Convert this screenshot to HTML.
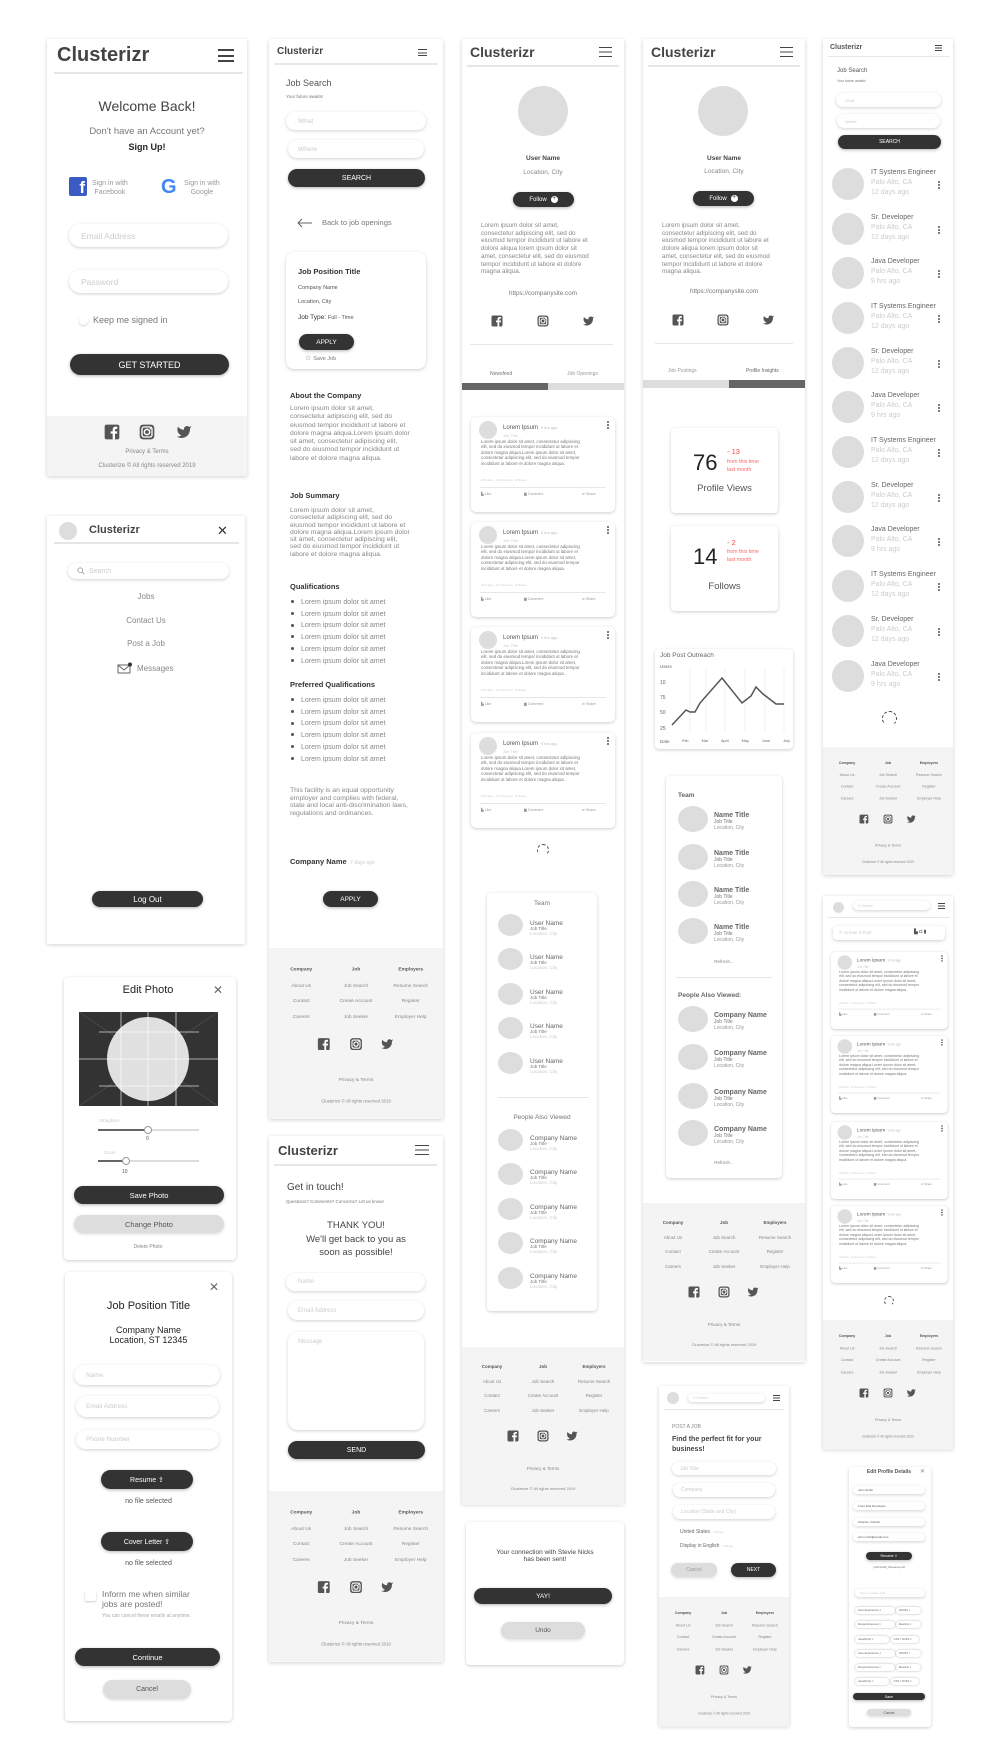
<!DOCTYPE html>
<html><head><meta charset="utf-8"><style>
*{box-sizing:border-box;margin:0;padding:0}
body{width:1000px;height:1750px;position:relative;overflow:hidden;background:#fff;font-family:"Liberation Sans",Arial,sans-serif;color:#555}
.a{position:absolute}
.t{position:absolute;white-space:nowrap;line-height:1}
.c{position:absolute;background:#fff;box-shadow:0 1px 4px rgba(0,0,0,.18)}
.r{position:absolute;background:#fff;border-radius:8px;box-shadow:0 1px 3px rgba(0,0,0,.2)}
.inp{position:absolute;background:#fff;border-radius:20px;box-shadow:0 1px 3px rgba(0,0,0,.18);color:#ccc;white-space:nowrap;display:flex;align-items:center}
.btn{position:absolute;background:#333;color:#fff;border-radius:20px;box-shadow:0 1px 3px rgba(0,0,0,.3);display:flex;align-items:center;justify-content:center;white-space:nowrap}
.gb{position:absolute;background:#ddd;color:#555;border-radius:20px;box-shadow:0 1px 3px rgba(0,0,0,.15);display:flex;align-items:center;justify-content:center;white-space:nowrap}
.av{position:absolute;border-radius:50%;background:#ddd}
.ln{position:absolute;height:2px;background:#e6e6e6}
.hb{position:absolute;border-top:solid #444;border-bottom:solid #444}
.hb:after{content:"";position:absolute;left:0;right:0;top:50%;transform:translateY(-50%);border-top:inherit;border-top-color:#444}
.ft{position:absolute;width:162px;height:158px;background:#f4f4f4;transform-origin:0 0}
.ft .col{position:absolute;top:13px;width:54px;text-align:center;font-size:4.5px;line-height:14.5px;color:#888}
.ft .col b{color:#555}
.ft .ic{position:absolute;top:83px;width:12px;height:12px}
.ft .p{position:absolute;left:0;right:0;text-align:center;font-size:4.5px;color:#888}
.post{position:absolute;width:144px;height:95px;background:#fff;border-radius:5px;box-shadow:0 1px 3px rgba(0,0,0,.2);transform-origin:0 0}
.post .tx{position:absolute;left:10px;top:22px;font-size:4.4px;line-height:5.4px;color:#777;white-space:nowrap}
.post .ac{position:absolute;top:75px;font-size:3.6px;color:#999;white-space:nowrap}
.dots{position:absolute;width:2px;height:2px;background:#555;border-radius:50%;box-shadow:0 3px 0 #555,0 6px 0 #555}
.para{position:absolute;white-space:nowrap;color:#888}
ul.q{position:absolute;list-style:none;font-size:7px;color:#888}
ul.q li{line-height:11.7px;white-space:nowrap}
ul.q li:before{content:"";display:inline-block;width:3px;height:3px;border-radius:50%;background:#555;margin:0 7px 1px 1px;vertical-align:middle}
</style></head><body>
<svg style="display:none">
<symbol id="fb" viewBox="0 0 24 24"><rect x="1" y="1" width="22" height="22" rx="3" fill="#555"/><path d="M16.5 23v-8.5h3l.5-3.5h-3.5V9c0-1 .3-1.7 1.8-1.7H20V4.2c-.4 0-1.4-.2-2.7-.2-2.7 0-4.3 1.6-4.3 4.5V11h-3v3.5h3V23z" fill="#fff"/></symbol>
<symbol id="ig" viewBox="0 0 24 24"><rect x="1" y="1" width="22" height="22" rx="5" fill="#555"/><rect x="4.5" y="4.5" width="15" height="15" rx="3" fill="none" stroke="#fff" stroke-width="2"/><circle cx="12" cy="12" r="4" fill="none" stroke="#fff" stroke-width="2.2"/><circle cx="17" cy="7" r="1.2" fill="#fff"/></symbol>
<symbol id="tw" viewBox="0 0 24 24"><path d="M23 3a10.9 10.9 0 0 1-3.14 1.530 4.48 4.48 0 0 0-7.86 3v1A10.66 10.66 0 0 1 3 4s-4 9 5 13a11.64 11.64 0 0 1-7 2c9 5 20 0 20-11.5a4.5 4.5 0 0 0-.08-.83A7.72 7.72 0 0 0 23 3z" fill="#555"/></symbol>
</svg>

<!-- ============ COL 1: LOGIN ============ -->
<div class="c" style="left:47px;top:39px;width:200px;height:437px"></div>
<div class="t" style="left:57px;top:45px;font-size:20px;font-weight:bold;color:#444">Clusterizr</div>
<div class="hb" style="left:218px;top:49px;width:16px;height:13px;border-width:2.5px"></div>
<div class="ln" style="left:54px;top:72px;width:189px"></div>
<div class="t" style="left:47px;width:200px;text-align:center;top:99px;font-size:14px;color:#444">Welcome Back!</div>
<div class="t" style="left:47px;width:200px;text-align:center;top:127px;font-size:9.5px;color:#777">Don't have an Account yet?</div>
<div class="t" style="left:47px;width:200px;text-align:center;top:143px;font-size:9px;font-weight:bold;color:#222">Sign Up!</div>
<div class="a" style="left:69px;top:177px;width:18px;height:19px;background:#3b5bc4;border-radius:2px;color:#fff;font-weight:bold;font-size:17px;text-align:right;padding-right:2px;line-height:22px;overflow:hidden">f</div>
<div class="t" style="left:92px;top:179px;font-size:7px;color:#999;text-align:center;line-height:9px">Sign in with<br>Facebook</div>
<div class="t" style="left:161px;top:177px;font-size:20px;font-weight:bold;color:#4285f4">G</div>
<div class="t" style="left:184px;top:179px;font-size:7px;color:#999;text-align:center;line-height:9px">Sign in with<br>Google</div>
<div class="inp" style="left:69px;top:224px;width:159px;height:23px;padding-left:12px;font-size:8.5px">Email Address</div>
<div class="inp" style="left:69px;top:270px;width:159px;height:23px;padding-left:12px;font-size:8.5px">Password</div>
<div class="a" style="left:79px;top:316px;width:9px;height:9px;border-radius:50%;box-shadow:0 1px 2px rgba(0,0,0,.2)"></div>
<div class="t" style="left:93px;top:316px;font-size:9px;color:#777">Keep me signed in</div>
<div class="btn" style="left:70px;top:354px;width:159px;height:21px;font-size:9px">GET STARTED</div>
<div class="a" style="left:47px;top:416px;width:200px;height:60px;background:#f4f4f4"></div>
<svg class="a" style="left:104px;top:424px;width:16px;height:16px"><use href="#fb"/></svg>
<svg class="a" style="left:139px;top:424px;width:16px;height:16px"><use href="#ig"/></svg>
<svg class="a" style="left:176px;top:424px;width:16px;height:16px"><use href="#tw"/></svg>
<div class="t" style="left:47px;width:200px;text-align:center;top:449px;font-size:6px;color:#888">Privacy &amp; Terms</div>
<div class="t" style="left:47px;width:200px;text-align:center;top:463px;font-size:6px;color:#888">Clusterize © All rights reserved 2019</div>

<!-- ============ COL 1: MENU ============ -->
<div class="c" style="left:47px;top:516px;width:198px;height:428px"></div>
<div class="av" style="left:59px;top:522px;width:18px;height:18px"></div>
<div class="t" style="left:89px;top:525px;font-size:11px;font-weight:bold;color:#444">Clusterizr</div>
<div class="t" style="left:217px;top:524px;font-size:13px;color:#333">✕</div>
<div class="ln" style="left:54px;top:542px;width:185px"></div>
<div class="inp" style="left:68px;top:563px;width:161px;height:16px;padding-left:9px;font-size:7px"><svg width="8" height="8" viewBox="0 0 10 10" style="margin-right:4px"><circle cx="4" cy="4" r="3" fill="none" stroke="#999"/><path d="M6.3 6.3L9 9" stroke="#999"/></svg>Search</div>
<div class="t" style="left:47px;width:198px;text-align:center;top:593px;font-size:8px;color:#888">Jobs</div>
<div class="t" style="left:47px;width:198px;text-align:center;top:617px;font-size:8px;color:#888">Contact Us</div>
<div class="t" style="left:47px;width:198px;text-align:center;top:640px;font-size:8px;color:#888">Post a Job</div>
<svg class="a" style="left:117px;top:662px;width:15px;height:12px" viewBox="0 0 15 12"><rect x="1" y="3" width="12" height="8" fill="none" stroke="#666"/><path d="M1 3l6 5 6-5" fill="none" stroke="#666"/><circle cx="13" cy="2.5" r="2" fill="#333"/></svg>
<div class="t" style="left:137px;top:665px;font-size:8px;color:#888">Messages</div>
<div class="btn" style="left:92px;top:891px;width:111px;height:16px;font-size:8px">Log Out</div>

<!-- ============ COL 1: EDIT PHOTO ============ -->
<div class="r" style="left:64px;top:977px;width:172px;height:283px;border-radius:4px"></div>
<div class="t" style="left:64px;width:168px;text-align:center;top:985px;font-size:11px;color:#222">Edit Photo</div>
<div class="t" style="left:213px;top:984px;font-size:12px;color:#666">✕</div>
<svg class="a" style="left:79px;top:1012px;width:139px;height:94px" viewBox="0 0 139 94">
<rect width="139" height="94" fill="#333"/>
<path d="M0 0L139 94M139 0L0 94" stroke="#555" stroke-width=".6"/>
<ellipse cx="69" cy="47" rx="41" ry="42" fill="#e0e0e0"/>
<path d="M42 0v94M97 0v94M20 20h100M20 74h100M0 47h139M69 0v94" stroke="#fff" stroke-width=".8" opacity=".8"/>
</svg>
<div class="t" style="left:99px;top:1119px;font-size:4.5px;color:#ccc">Straighten</div>
<div class="a" style="left:98px;top:1129px;width:101px;height:2px;background:#ddd"></div>
<div class="a" style="left:98px;top:1129px;width:50px;height:2px;background:#666"></div>
<div class="a" style="left:144px;top:1126px;width:8px;height:8px;border-radius:50%;background:#fff;border:1px solid #999"></div>
<div class="t" style="left:146px;top:1137px;font-size:5px;color:#555">0</div>
<div class="t" style="left:104px;top:1151px;font-size:4.5px;color:#ccc">Zoom</div>
<div class="a" style="left:98px;top:1160px;width:101px;height:2px;background:#ddd"></div>
<div class="a" style="left:98px;top:1160px;width:28px;height:2px;background:#666"></div>
<div class="a" style="left:122px;top:1157px;width:8px;height:8px;border-radius:50%;background:#fff;border:1px solid #999"></div>
<div class="t" style="left:122px;top:1170px;font-size:5px;color:#555">10</div>
<div class="btn" style="left:74px;top:1186px;width:150px;height:18px;font-size:7.5px">Save Photo</div>
<div class="gb" style="left:74px;top:1215px;width:150px;height:18px;font-size:7.5px">Change Photo</div>
<div class="t" style="left:64px;width:168px;text-align:center;top:1245px;font-size:5px;color:#888">Delete Photo</div>

<!-- ============ COL 1: JOB APPLY ============ -->
<div class="r" style="left:65px;top:1272px;width:167px;height:449px;border-radius:4px"></div>
<div class="t" style="left:209px;top:1281px;font-size:12px;color:#666">✕</div>
<div class="t" style="left:65px;width:167px;text-align:center;top:1301px;font-size:11px;color:#222">Job Position Title</div>
<div class="t" style="left:65px;width:167px;text-align:center;top:1325px;font-size:9px;color:#222;line-height:10px">Company Name<br>Location, ST 12345</div>
<div class="inp" style="left:74px;top:1365px;width:146px;height:20px;padding-left:12px;font-size:6.5px">Name</div>
<div class="inp" style="left:76px;top:1396px;width:143px;height:21px;padding-left:10px;font-size:6.5px">Email Address</div>
<div class="inp" style="left:76px;top:1430px;width:143px;height:19px;padding-left:10px;font-size:6.5px">Phone Number</div>
<div class="btn" style="left:101px;top:1470px;width:92px;height:19px;font-size:7px">Resume ⇪</div>
<div class="t" style="left:65px;width:167px;text-align:center;top:1498px;font-size:7px;color:#555">no file selected</div>
<div class="btn" style="left:101px;top:1532px;width:92px;height:19px;font-size:7px">Cover Letter ⇪</div>
<div class="t" style="left:65px;width:167px;text-align:center;top:1560px;font-size:7px;color:#555">no file selected</div>
<div class="a" style="left:85px;top:1590px;width:11px;height:11px;border-radius:2px;box-shadow:0 1px 2px rgba(0,0,0,.2)"></div>
<div class="t" style="left:102px;top:1589px;font-size:8.5px;color:#777;line-height:10px">Inform me when similar<br>jobs are posted!</div>
<div class="t" style="left:102px;top:1614px;font-size:5px;color:#aaa">You can cancel these emails at anytime.</div>
<div class="btn" style="left:75px;top:1648px;width:145px;height:18px;font-size:7.5px">Continue</div>
<div class="gb" style="left:103px;top:1680px;width:88px;height:19px;font-size:7px">Cancel</div>

<!-- ============ COL 2: JOB DETAIL ============ -->
<div class="c" style="left:269px;top:39px;width:174px;height:1080px"></div>
<div class="t" style="left:277px;top:47px;font-size:10px;font-weight:bold;color:#444">Clusterizr</div>
<div class="hb" style="left:418px;top:49px;width:9px;height:7px;border-width:1.3px"></div>
<div class="ln" style="left:274px;top:63px;width:164px"></div>
<div class="t" style="left:286px;top:79px;font-size:9px;color:#555">Job Search</div>
<div class="t" style="left:286px;top:95px;font-size:4.5px;color:#777">Your future awaits!</div>
<div class="inp" style="left:286px;top:112px;width:140px;height:18px;padding-left:12px;font-size:6.5px">What</div>
<div class="inp" style="left:288px;top:140px;width:136px;height:18px;padding-left:10px;font-size:6.5px">Where</div>
<div class="btn" style="left:288px;top:169px;width:137px;height:18px;font-size:7px">SEARCH</div>
<svg class="a" style="left:297px;top:218px;width:16px;height:10px" viewBox="0 0 16 10"><path d="M15 5H1M5 1L1 5l4 4" fill="none" stroke="#666"/></svg>
<div class="t" style="left:322px;top:219px;font-size:7.5px;color:#777">Back to job openings</div>
<div class="r" style="left:286px;top:252px;width:140px;height:117px"></div>
<div class="t" style="left:298px;top:268px;font-size:7.5px;font-weight:bold;color:#333">Job Position Title</div>
<div class="t" style="left:298px;top:286px;font-size:5.5px;color:#555">Company Name</div>
<div class="t" style="left:298px;top:300px;font-size:5.5px;color:#555">Location, City</div>
<div class="t" style="left:298px;top:315px;font-size:6.5px;color:#333">Job Type: <span style="font-size:5.5px;color:#555">Full - Time</span></div>
<div class="btn" style="left:299px;top:334px;width:55px;height:16px;font-size:6.5px">APPLY</div>
<div class="t" style="left:305px;top:355px;font-size:7px;color:#777">☆ <span style="font-size:5.5px">Save Job</span></div>
<div class="t" style="left:290px;top:392px;font-size:7.5px;font-weight:bold;color:#333">About the Company</div>
<div class="para" style="left:290px;top:405px;font-size:6.8px;line-height:8.3px">Lorem ipsum dolor sit amet,<br>consectetur adipiscing elit, sed do<br>eiusmod tempor incididunt ut labore et<br>dolore magna aliqua.Lorem ipsum dolor<br>sit amet, consectetur adipiscing elit,<br>sed do eiusmod tempor incididunt ut<br>labore et dolore magna aliqua.</div>
<div class="t" style="left:290px;top:492px;font-size:7.5px;font-weight:bold;color:#333">Job Summary</div>
<div class="para" style="left:290px;top:507px;font-size:6.8px;line-height:7.3px">Lorem ipsum dolor sit amet,<br>consectetur adipiscing elit, sed do<br>eiusmod tempor incididunt ut labore et<br>dolore magna aliqua.Lorem ipsum dolor<br>sit amet, consectetur adipiscing elit,<br>sed do eiusmod tempor incididunt ut<br>labore et dolore magna aliqua.</div>
<div class="t" style="left:290px;top:583px;font-size:7.5px;font-weight:bold;color:#333">Qualifications</div>
<ul class="q" style="left:290px;top:597px"><li>Lorem ipsum dolor sit amet</li><li>Lorem ipsum dolor sit amet</li><li>Lorem ipsum dolor sit amet</li><li>Lorem ipsum dolor sit amet</li><li>Lorem ipsum dolor sit amet</li><li>Lorem ipsum dolor sit amet</li></ul>
<div class="t" style="left:290px;top:681px;font-size:7.5px;font-weight:bold;color:#333">Preferred Qualifications</div>
<ul class="q" style="left:290px;top:695px"><li>Lorem ipsum dolor sit amet</li><li>Lorem ipsum dolor sit amet</li><li>Lorem ipsum dolor sit amet</li><li>Lorem ipsum dolor sit amet</li><li>Lorem ipsum dolor sit amet</li><li>Lorem ipsum dolor sit amet</li></ul>
<div class="para" style="left:290px;top:787px;font-size:6.8px;line-height:7.6px">This facility is an equal opportunity<br>employer and complies with federal,<br>state and local anti-discrimination laws,<br>regulations and ordinances.</div>
<div class="t" style="left:290px;top:858px;font-size:7.5px;font-weight:bold;color:#333">Company Name <span style="font-size:5px;font-weight:normal;color:#ccc">&nbsp;7 days ago</span></div>
<div class="btn" style="left:323px;top:891px;width:55px;height:16px;font-size:6.5px">APPLY</div>
<div class="ft" style="left:269px;top:948px;transform:scale(1.074,1.08)">
 <div class="col" style="left:3px"><b>Company</b><br>About Us<br>Contact<br>Careers</div>
 <div class="col" style="left:54px"><b>Job</b><br>Job Search<br>Create Account<br>Job Seeker</div>
 <div class="col" style="left:105px"><b>Employers</b><br>Resume Search<br>Register<br>Employer Help</div>
 <svg class="ic" style="left:45px"><use href="#fb"/></svg><svg class="ic" style="left:75px"><use href="#ig"/></svg><svg class="ic" style="left:104px"><use href="#tw"/></svg>
 <div class="p" style="top:119px">Privacy &amp; Terms</div><div class="p" style="top:139px;font-size:4px">Clusterize © All rights reserved 2019</div>
</div>

<!-- ============ COL 2: CONTACT ============ -->
<div class="c" style="left:269px;top:1136px;width:174px;height:526px"></div>
<div class="t" style="left:278px;top:1144px;font-size:13px;font-weight:bold;color:#444">Clusterizr</div>
<div class="hb" style="left:415px;top:1145px;width:14px;height:10px;border-width:1.8px"></div>
<div class="ln" style="left:274px;top:1164px;width:163px"></div>
<div class="t" style="left:287px;top:1183px;font-size:10px;color:#444">Get in touch!</div>
<div class="t" style="left:286px;top:1200px;font-size:4.5px;color:#777">Questions? Comments? Concerns? Let us know!</div>
<div class="t" style="left:269px;width:174px;text-align:center;top:1219px;font-size:9.5px;color:#444;line-height:13.5px">THANK YOU!<br>We'll get back to you as<br>soon as possible!</div>
<div class="inp" style="left:286px;top:1273px;width:139px;height:18px;padding-left:12px;font-size:6px">Name</div>
<div class="inp" style="left:288px;top:1301px;width:136px;height:19px;padding-left:10px;font-size:6px">Email Address</div>
<div class="inp" style="left:288px;top:1332px;width:136px;height:98px;padding:7px 10px;font-size:6px;border-radius:10px;align-items:flex-start">Message</div>
<div class="btn" style="left:288px;top:1441px;width:137px;height:18px;font-size:7px">SEND</div>
<div class="ft" style="left:269px;top:1491px;transform:scale(1.074,1.08)">
 <div class="col" style="left:3px"><b>Company</b><br>About Us<br>Contact<br>Careers</div>
 <div class="col" style="left:54px"><b>Job</b><br>Job Search<br>Create Account<br>Job Seeker</div>
 <div class="col" style="left:105px"><b>Employers</b><br>Resume Search<br>Register<br>Employer Help</div>
 <svg class="ic" style="left:45px"><use href="#fb"/></svg><svg class="ic" style="left:75px"><use href="#ig"/></svg><svg class="ic" style="left:104px"><use href="#tw"/></svg>
 <div class="p" style="top:119px">Privacy &amp; Terms</div><div class="p" style="top:139px;font-size:4px">Clusterize © All rights reserved 2019</div>
</div>

<!-- ============ COL 3: PROFILE NEWSFEED ============ -->
<div class="c" style="left:462px;top:39px;width:162px;height:1465px"></div>
<div class="t" style="left:470px;top:45px;font-size:14px;font-weight:bold;color:#444">Clusterizr</div>
<div class="hb" style="left:599px;top:47px;width:13px;height:10px;border-width:1.8px"></div>
<div class="ln" style="left:467px;top:65px;width:152px"></div>
<div class="av" style="left:518px;top:86px;width:50px;height:50px"></div>
<div class="t" style="left:462px;width:162px;text-align:center;top:156px;font-size:6.5px;font-weight:bold;color:#444">User Name</div>
<div class="t" style="left:462px;width:162px;text-align:center;top:170px;font-size:6.5px;color:#888">Location, City</div>
<div class="btn" style="left:513px;top:192px;width:61px;height:15px;font-size:6px">Follow <span style="display:inline-block;width:7px;height:7px;border-radius:50%;background:#fff;color:#333;font-size:6px;line-height:7px;text-align:center;margin-left:4px">+</span></div>
<div class="para" style="left:481px;top:222px;font-size:6.3px;line-height:7.7px">Lorem ipsum dolor sit amet,<br>consectetur adipiscing elit, sed do<br>eiusmod tempor incididunt ut labore et<br>dolore aliqua lorem ipsum dolor sit<br>amet, consectetur elit, sed do eiusmod<br>tempor incididunt ut labore et dolore<br>magna aliqua.</div>
<div class="t" style="left:462px;width:162px;text-align:center;top:291px;font-size:6.3px;color:#777">https://companysite.com</div>
<svg class="a" style="left:491px;top:315px;width:12px;height:12px"><use href="#fb"/></svg>
<svg class="a" style="left:537px;top:315px;width:12px;height:12px"><use href="#ig"/></svg>
<svg class="a" style="left:582px;top:315px;width:13px;height:12px"><use href="#tw"/></svg>
<div class="ln" style="left:470px;top:344px;width:143px;height:1px"></div>
<div class="t" style="left:490px;top:372px;font-size:5px;color:#777">Newsfeed</div>
<div class="t" style="left:567px;top:372px;font-size:5px;color:#999">Job Openings</div>
<div class="a" style="left:462px;top:383px;width:86px;height:7px;background:#666"></div>
<div class="a" style="left:548px;top:383px;width:76px;height:7px;background:#ddd"></div>

<div class="post" style="left:471px;top:417px"><div class="av" style="left:8px;top:4px;width:18px;height:18px"></div><div class="t" style="left:32px;top:8px;font-size:6px">Lorem Ipsum <span style="font-size:4px;color:#bbb">&nbsp;9 hrs ago</span></div><div class="t" style="left:32px;top:17px;font-size:4px;color:#ccc">Job Title</div><div class="dots" style="left:136px;top:4px"></div><div class="tx">Lorem ipsum dolor sit amet, consectetur adipiscing<br>elit, sed do eiusmod tempor incididunt ut labore et<br>dolore magna aliqua.Lorem ipsum dolor sit amet,<br>consectetur adipiscing elit, sed do eiusmod tempor<br>incididunt ut labore et dolore magna aliqua.</div><div class="t" style="left:10px;top:62px;font-size:2.8px;color:#ccc">263 Likes · 43 Comments · 8 Shares</div><div class="ln" style="left:9px;top:70px;width:126px;height:1px"></div><div class="ac" style="left:10px">▙ Like</div><div class="ac" style="left:53px">▆ Comment</div><div class="ac" style="left:111px">➦ Share</div></div>
<div class="post" style="left:471px;top:522px"><div class="av" style="left:8px;top:4px;width:18px;height:18px"></div><div class="t" style="left:32px;top:8px;font-size:6px">Lorem Ipsum <span style="font-size:4px;color:#bbb">&nbsp;9 hrs ago</span></div><div class="t" style="left:32px;top:17px;font-size:4px;color:#ccc">Job Title</div><div class="dots" style="left:136px;top:4px"></div><div class="tx">Lorem ipsum dolor sit amet, consectetur adipiscing<br>elit, sed do eiusmod tempor incididunt ut labore et<br>dolore magna aliqua.Lorem ipsum dolor sit amet,<br>consectetur adipiscing elit, sed do eiusmod tempor<br>incididunt ut labore et dolore magna aliqua.</div><div class="t" style="left:10px;top:62px;font-size:2.8px;color:#ccc">263 Likes · 43 Comments · 8 Shares</div><div class="ln" style="left:9px;top:70px;width:126px;height:1px"></div><div class="ac" style="left:10px">▙ Like</div><div class="ac" style="left:53px">▆ Comment</div><div class="ac" style="left:111px">➦ Share</div></div>
<div class="post" style="left:471px;top:627px"><div class="av" style="left:8px;top:4px;width:18px;height:18px"></div><div class="t" style="left:32px;top:8px;font-size:6px">Lorem Ipsum <span style="font-size:4px;color:#bbb">&nbsp;9 hrs ago</span></div><div class="t" style="left:32px;top:17px;font-size:4px;color:#ccc">Job Title</div><div class="dots" style="left:136px;top:4px"></div><div class="tx">Lorem ipsum dolor sit amet, consectetur adipiscing<br>elit, sed do eiusmod tempor incididunt ut labore et<br>dolore magna aliqua.Lorem ipsum dolor sit amet,<br>consectetur adipiscing elit, sed do eiusmod tempor<br>incididunt ut labore et dolore magna aliqua.</div><div class="t" style="left:10px;top:62px;font-size:2.8px;color:#ccc">263 Likes · 43 Comments · 8 Shares</div><div class="ln" style="left:9px;top:70px;width:126px;height:1px"></div><div class="ac" style="left:10px">▙ Like</div><div class="ac" style="left:53px">▆ Comment</div><div class="ac" style="left:111px">➦ Share</div></div>
<div class="post" style="left:471px;top:733px"><div class="av" style="left:8px;top:4px;width:18px;height:18px"></div><div class="t" style="left:32px;top:8px;font-size:6px">Lorem Ipsum <span style="font-size:4px;color:#bbb">&nbsp;9 hrs ago</span></div><div class="t" style="left:32px;top:17px;font-size:4px;color:#ccc">Job Title</div><div class="dots" style="left:136px;top:4px"></div><div class="tx">Lorem ipsum dolor sit amet, consectetur adipiscing<br>elit, sed do eiusmod tempor incididunt ut labore et<br>dolore magna aliqua.Lorem ipsum dolor sit amet,<br>consectetur adipiscing elit, sed do eiusmod tempor<br>incididunt ut labore et dolore magna aliqua.</div><div class="t" style="left:10px;top:62px;font-size:2.8px;color:#ccc">263 Likes · 43 Comments · 8 Shares</div><div class="ln" style="left:9px;top:70px;width:126px;height:1px"></div><div class="ac" style="left:10px">▙ Like</div><div class="ac" style="left:53px">▆ Comment</div><div class="ac" style="left:111px">➦ Share</div></div>
<div class="a" style="left:537px;top:844px;width:12px;height:12px;border-radius:50%;border:1.5px dashed #555;border-bottom-color:transparent"></div>

<div class="r" style="left:487px;top:893px;width:110px;height:418px;border-radius:4px"></div>
<div class="t" style="left:487px;width:110px;text-align:center;top:901px;font-size:6.5px;color:#777">Team</div>
<div class="av" style="left:498px;top:914px;width:25px;height:22px"></div><div class="t" style="left:530px;top:921px;font-size:6.5px;color:#666;line-height:5px">User Name<br><span style="font-size:4.5px;color:#777">Job Title</span><br><span style="font-size:4.5px;color:#ccc">Location, City</span></div>
<div class="av" style="left:498px;top:948px;width:25px;height:22px"></div><div class="t" style="left:530px;top:955px;font-size:6.5px;color:#666;line-height:5px">User Name<br><span style="font-size:4.5px;color:#777">Job Title</span><br><span style="font-size:4.5px;color:#ccc">Location, City</span></div>
<div class="av" style="left:498px;top:983px;width:25px;height:22px"></div><div class="t" style="left:530px;top:990px;font-size:6.5px;color:#666;line-height:5px">User Name<br><span style="font-size:4.5px;color:#777">Job Title</span><br><span style="font-size:4.5px;color:#ccc">Location, City</span></div>
<div class="av" style="left:498px;top:1017px;width:25px;height:22px"></div><div class="t" style="left:530px;top:1024px;font-size:6.5px;color:#666;line-height:5px">User Name<br><span style="font-size:4.5px;color:#777">Job Title</span><br><span style="font-size:4.5px;color:#ccc">Location, City</span></div>
<div class="av" style="left:498px;top:1052px;width:25px;height:22px"></div><div class="t" style="left:530px;top:1059px;font-size:6.5px;color:#666;line-height:5px">User Name<br><span style="font-size:4.5px;color:#777">Job Title</span><br><span style="font-size:4.5px;color:#ccc">Location, City</span></div>
<div class="ln" style="left:498px;top:1097px;width:91px;height:1px"></div>
<div class="t" style="left:487px;width:110px;text-align:center;top:1115px;font-size:6.5px;color:#777">People Also Viewed</div>
<div class="av" style="left:498px;top:1129px;width:25px;height:22px"></div><div class="t" style="left:530px;top:1136px;font-size:6.5px;color:#666;line-height:5px">Company Name<br><span style="font-size:4.5px;color:#777">Job Title</span><br><span style="font-size:4.5px;color:#ccc">Location, City</span></div>
<div class="av" style="left:498px;top:1163px;width:25px;height:22px"></div><div class="t" style="left:530px;top:1170px;font-size:6.5px;color:#666;line-height:5px">Company Name<br><span style="font-size:4.5px;color:#777">Job Title</span><br><span style="font-size:4.5px;color:#ccc">Location, City</span></div>
<div class="av" style="left:498px;top:1198px;width:25px;height:22px"></div><div class="t" style="left:530px;top:1205px;font-size:6.5px;color:#666;line-height:5px">Company Name<br><span style="font-size:4.5px;color:#777">Job Title</span><br><span style="font-size:4.5px;color:#ccc">Location, City</span></div>
<div class="av" style="left:498px;top:1232px;width:25px;height:22px"></div><div class="t" style="left:530px;top:1239px;font-size:6.5px;color:#666;line-height:5px">Company Name<br><span style="font-size:4.5px;color:#777">Job Title</span><br><span style="font-size:4.5px;color:#ccc">Location, City</span></div>
<div class="av" style="left:498px;top:1267px;width:25px;height:22px"></div><div class="t" style="left:530px;top:1274px;font-size:6.5px;color:#666;line-height:5px">Company Name<br><span style="font-size:4.5px;color:#777">Job Title</span><br><span style="font-size:4.5px;color:#ccc">Location, City</span></div>
<div class="ft" style="left:462px;top:1347px">
 <div class="col" style="left:3px"><b>Company</b><br>About Us<br>Contact<br>Careers</div>
 <div class="col" style="left:54px"><b>Job</b><br>Job Search<br>Create Account<br>Job Seeker</div>
 <div class="col" style="left:105px"><b>Employers</b><br>Resume Search<br>Register<br>Employer Help</div>
 <svg class="ic" style="left:45px"><use href="#fb"/></svg><svg class="ic" style="left:75px"><use href="#ig"/></svg><svg class="ic" style="left:104px"><use href="#tw"/></svg>
 <div class="p" style="top:119px">Privacy &amp; Terms</div><div class="p" style="top:139px;font-size:4px">Clusterize © All rights reserved 2019</div>
</div>

<!-- YAY -->
<div class="r" style="left:466px;top:1522px;width:158px;height:143px;border-radius:4px"></div>
<div class="t" style="left:466px;width:158px;text-align:center;top:1549px;font-size:6.5px;color:#444;line-height:7px">Your connection with Stevie Nicks<br>has been sent!</div>
<div class="btn" style="left:474px;top:1588px;width:138px;height:16px;font-size:6.5px">YAY!</div>
<div class="gb" style="left:501px;top:1622px;width:84px;height:17px;font-size:6.5px">Undo</div>

<!-- ============ COL 4: PROFILE INSIGHTS ============ -->
<div class="c" style="left:643px;top:39px;width:162px;height:1323px"></div>
<div class="t" style="left:651px;top:45px;font-size:14px;font-weight:bold;color:#444">Clusterizr</div>
<div class="hb" style="left:780px;top:47px;width:13px;height:10px;border-width:1.8px"></div>
<div class="ln" style="left:648px;top:65px;width:152px"></div>
<div class="av" style="left:698px;top:86px;width:50px;height:50px"></div>
<div class="t" style="left:643px;width:162px;text-align:center;top:156px;font-size:6.5px;font-weight:bold;color:#444">User Name</div>
<div class="t" style="left:643px;width:162px;text-align:center;top:169px;font-size:6.5px;color:#888">Location, City</div>
<div class="btn" style="left:693px;top:191px;width:61px;height:15px;font-size:6px">Follow <span style="display:inline-block;width:7px;height:7px;border-radius:50%;background:#fff;color:#333;font-size:6px;line-height:7px;text-align:center;margin-left:4px">+</span></div>
<div class="para" style="left:662px;top:222px;font-size:6.3px;line-height:7.7px">Lorem ipsum dolor sit amet,<br>consectetur adipiscing elit, sed do<br>eiusmod tempor incididunt ut labore et<br>dolore aliqua lorem ipsum dolor sit<br>amet, consectetur elit, sed do eiusmod<br>tempor incididunt ut labore et dolore<br>magna aliqua.</div>
<div class="t" style="left:643px;width:162px;text-align:center;top:289px;font-size:6.3px;color:#777">https://companysite.com</div>
<svg class="a" style="left:672px;top:314px;width:12px;height:12px"><use href="#fb"/></svg>
<svg class="a" style="left:717px;top:314px;width:12px;height:12px"><use href="#ig"/></svg>
<svg class="a" style="left:762px;top:314px;width:13px;height:12px"><use href="#tw"/></svg>
<div class="ln" style="left:655px;top:343px;width:138px;height:1px"></div>
<div class="t" style="left:668px;top:369px;font-size:5px;color:#999">Job Postings</div>
<div class="t" style="left:746px;top:369px;font-size:5px;color:#666">Profile Insights</div>
<div class="a" style="left:643px;top:380px;width:86px;height:8px;background:#ddd"></div>
<div class="a" style="left:729px;top:380px;width:76px;height:8px;background:#666"></div>
<div class="r" style="left:671px;top:428px;width:107px;height:85px;border-radius:4px"></div>
<div class="t" style="left:693px;top:452px;font-size:22px;color:#222">76</div>
<div class="t" style="left:727px;top:448px;font-size:7.5px;color:#f44">- 13</div>
<div class="t" style="left:727px;top:459px;font-size:5.3px;color:#f66;line-height:7.5px">from this time<br>last month</div>
<div class="t" style="left:671px;width:107px;text-align:center;top:484px;font-size:9.5px;color:#555">Profile Views</div>
<div class="r" style="left:671px;top:526px;width:107px;height:85px;border-radius:4px"></div>
<div class="t" style="left:693px;top:546px;font-size:22px;color:#222">14</div>
<div class="t" style="left:727px;top:539px;font-size:7.5px;color:#f44">- 2</div>
<div class="t" style="left:727px;top:549px;font-size:5.3px;color:#f66;line-height:7.5px">from this time<br>last month</div>
<div class="t" style="left:671px;width:107px;text-align:center;top:582px;font-size:9.5px;color:#555">Follows</div>
<div class="r" style="left:655px;top:649px;width:138px;height:100px;border-radius:4px"></div>
<div class="t" style="left:660px;top:653px;font-size:6.5px;color:#666">Job Post Outreach</div>
<div class="t" style="left:660px;top:665px;font-size:4.5px;color:#666">Users</div>
<div class="t" style="left:660px;top:681px;font-size:5px;color:#666">10</div>
<div class="t" style="left:660px;top:696px;font-size:5px;color:#666">75</div>
<div class="t" style="left:660px;top:711px;font-size:5px;color:#666">50</div>
<div class="t" style="left:660px;top:727px;font-size:5px;color:#666">25</div>
<div class="t" style="left:660px;top:740px;font-size:4.5px;color:#666">Date</div>
<div class="t" style="left:682px;top:740px;font-size:3.8px;color:#666;word-spacing:12px">Feb Mar April May June July</div>
<svg class="a" style="left:655px;top:649px;width:138px;height:100px" viewBox="655 649 138 100"><path d="M690 668v64M706 668v64M725 668v64M745 668v64M765 668v64M784 668v64" stroke="#eee" stroke-width=".8"/><polyline points="672,725 686,710 690,712 695,712 700,703 722,678 742,703 751,696 756,687 763,694 776,704 784,704" fill="none" stroke="#555" stroke-width="1.5"/></svg>
<div class="r" style="left:666px;top:776px;width:116px;height:402px;border-radius:4px"></div>
<div class="t" style="left:678px;top:793px;font-size:6.5px;font-weight:bold;color:#666">Team</div>
<div class="av" style="left:678px;top:806px;width:30px;height:26px"></div><div class="t" style="left:714px;top:813px;font-size:7px;font-weight:bold;color:#666;line-height:5.5px">Name Title<br><span style="font-size:5px;font-weight:normal;color:#777">Job Title</span><br><span style="font-size:5px;font-weight:normal;color:#999">Location, City</span></div>
<div class="av" style="left:678px;top:844px;width:30px;height:26px"></div><div class="t" style="left:714px;top:851px;font-size:7px;font-weight:bold;color:#666;line-height:5.5px">Name Title<br><span style="font-size:5px;font-weight:normal;color:#777">Job Title</span><br><span style="font-size:5px;font-weight:normal;color:#999">Location, City</span></div>
<div class="av" style="left:678px;top:881px;width:30px;height:26px"></div><div class="t" style="left:714px;top:888px;font-size:7px;font-weight:bold;color:#666;line-height:5.5px">Name Title<br><span style="font-size:5px;font-weight:normal;color:#777">Job Title</span><br><span style="font-size:5px;font-weight:normal;color:#999">Location, City</span></div>
<div class="av" style="left:678px;top:918px;width:30px;height:26px"></div><div class="t" style="left:714px;top:925px;font-size:7px;font-weight:bold;color:#666;line-height:5.5px">Name Title<br><span style="font-size:5px;font-weight:normal;color:#777">Job Title</span><br><span style="font-size:5px;font-weight:normal;color:#999">Location, City</span></div>
<div class="t" style="left:666px;width:116px;text-align:center;top:960px;font-size:4.5px;color:#888">Refresh...</div>
<div class="ln" style="left:676px;top:977px;width:96px;height:1px"></div>
<div class="t" style="left:678px;top:993px;font-size:6.5px;font-weight:bold;color:#666">People Also Viewed:</div>
<div class="av" style="left:678px;top:1006px;width:30px;height:26px"></div><div class="t" style="left:714px;top:1013px;font-size:7px;font-weight:bold;color:#666;line-height:5.5px">Company Name<br><span style="font-size:5px;font-weight:normal;color:#777">Job Title</span><br><span style="font-size:5px;font-weight:normal;color:#999">Location, City</span></div>
<div class="av" style="left:678px;top:1044px;width:30px;height:26px"></div><div class="t" style="left:714px;top:1051px;font-size:7px;font-weight:bold;color:#666;line-height:5.5px">Company Name<br><span style="font-size:5px;font-weight:normal;color:#777">Job Title</span><br><span style="font-size:5px;font-weight:normal;color:#999">Location, City</span></div>
<div class="av" style="left:678px;top:1083px;width:30px;height:26px"></div><div class="t" style="left:714px;top:1090px;font-size:7px;font-weight:bold;color:#666;line-height:5.5px">Company Name<br><span style="font-size:5px;font-weight:normal;color:#777">Job Title</span><br><span style="font-size:5px;font-weight:normal;color:#999">Location, City</span></div>
<div class="av" style="left:678px;top:1120px;width:30px;height:26px"></div><div class="t" style="left:714px;top:1127px;font-size:7px;font-weight:bold;color:#666;line-height:5.5px">Company Name<br><span style="font-size:5px;font-weight:normal;color:#777">Job Title</span><br><span style="font-size:5px;font-weight:normal;color:#999">Location, City</span></div>
<div class="t" style="left:666px;width:116px;text-align:center;top:1161px;font-size:4.5px;color:#888">Refresh...</div>
<div class="ft" style="left:643px;top:1203px">
 <div class="col" style="left:3px"><b>Company</b><br>About Us<br>Contact<br>Careers</div>
 <div class="col" style="left:54px"><b>Job</b><br>Job Search<br>Create Account<br>Job Seeker</div>
 <div class="col" style="left:105px"><b>Employers</b><br>Resume Search<br>Register<br>Employer Help</div>
 <svg class="ic" style="left:45px"><use href="#fb"/></svg><svg class="ic" style="left:75px"><use href="#ig"/></svg><svg class="ic" style="left:104px"><use href="#tw"/></svg>
 <div class="p" style="top:119px">Privacy &amp; Terms</div><div class="p" style="top:139px;font-size:4px">Clusterize © All rights reserved 2019</div>
</div>

<!-- POST A JOB -->
<div class="c" style="left:659px;top:1386px;width:130px;height:340px"></div>
<div class="av" style="left:667px;top:1392px;width:12px;height:12px"></div>
<div class="inp" style="left:688px;top:1394px;width:77px;height:8px;font-size:3.5px;padding-left:5px">⚲ Search</div>
<div class="hb" style="left:773px;top:1395px;width:7px;height:6px;border-width:1px"></div>
<div class="ln" style="left:664px;top:1409px;width:120px;height:1px"></div>
<div class="t" style="left:672px;top:1425px;font-size:5px;color:#888">POST A JOB</div>
<div class="t" style="left:672px;top:1435px;font-size:7px;font-weight:bold;color:#444;line-height:9.5px">Find the perfect fit for your<br>business!</div>
<div class="inp" style="left:672px;top:1462px;width:104px;height:13px;font-size:5px;padding-left:8px">Job Title</div>
<div class="inp" style="left:673px;top:1483px;width:102px;height:14px;font-size:5px;padding-left:8px">Company</div>
<div class="inp" style="left:673px;top:1505px;width:102px;height:14px;font-size:5px;padding-left:8px">Location (State and City)</div>
<div class="t" style="left:680px;top:1530px;font-size:5px;color:#666">United States <span style="font-size:3px;color:#ccc">&nbsp;&nbsp;Change</span></div>
<div class="t" style="left:680px;top:1544px;font-size:5px;color:#666">Display in English <span style="font-size:3px;color:#ccc">&nbsp;&nbsp;Change</span></div>
<div class="gb" style="left:671px;top:1563px;width:46px;height:14px;font-size:5px;color:#999">Cancel</div>
<div class="btn" style="left:731px;top:1563px;width:45px;height:14px;font-size:5px">NEXT</div>
<div class="ft" style="left:659px;top:1597px;transform:scale(.8025,.82)">
 <div class="col" style="left:3px"><b>Company</b><br>About Us<br>Contact<br>Careers</div>
 <div class="col" style="left:54px"><b>Job</b><br>Job Search<br>Create Account<br>Job Seeker</div>
 <div class="col" style="left:105px"><b>Employers</b><br>Resume Search<br>Register<br>Employer Help</div>
 <svg class="ic" style="left:45px"><use href="#fb"/></svg><svg class="ic" style="left:75px"><use href="#ig"/></svg><svg class="ic" style="left:104px"><use href="#tw"/></svg>
 <div class="p" style="top:119px">Privacy &amp; Terms</div><div class="p" style="top:139px;font-size:4px">Clusterize © All rights reserved 2019</div>
</div>

<!-- ============ COL 5: JOB LIST ============ -->
<div class="c" style="left:823px;top:39px;width:130px;height:836px"></div>
<div class="t" style="left:830px;top:44px;font-size:7px;font-weight:bold;color:#555">Clusterizr</div>
<div class="hb" style="left:935px;top:45px;width:7px;height:6px;border-width:1px"></div>
<div class="ln" style="left:828px;top:56px;width:122px;height:1px"></div>
<div class="t" style="left:837px;top:68px;font-size:6px;color:#555">Job Search</div>
<div class="t" style="left:837px;top:80px;font-size:3.5px;color:#777">Your future awaits!</div>
<div class="inp" style="left:836px;top:93px;width:105px;height:14px;font-size:4px;padding-left:9px">What</div>
<div class="inp" style="left:837px;top:114px;width:103px;height:14px;font-size:4px;padding-left:8px">Where</div>
<div class="btn" style="left:838px;top:135px;width:103px;height:14px;font-size:5px">SEARCH</div>
<div class="a" style="left:882px;top:711px;width:15px;height:15px;border-radius:50%;border:1.5px dashed #444;border-bottom-color:transparent"></div>
<div class="ft" style="left:823px;top:747px;transform:scale(.8025,.81)">
 <div class="col" style="left:3px"><b>Company</b><br>About Us<br>Contact<br>Careers</div>
 <div class="col" style="left:54px"><b>Job</b><br>Job Search<br>Create Account<br>Job Seeker</div>
 <div class="col" style="left:105px"><b>Employers</b><br>Resume Search<br>Register<br>Employer Help</div>
 <svg class="ic" style="left:45px"><use href="#fb"/></svg><svg class="ic" style="left:75px"><use href="#ig"/></svg><svg class="ic" style="left:104px"><use href="#tw"/></svg>
 <div class="p" style="top:119px">Privacy &amp; Terms</div><div class="p" style="top:139px;font-size:4px">Clusterize © All rights reserved 2019</div>
</div>

<div class="av" style="left:832px;top:168px;width:32px;height:32px"></div><div class="t" style="left:871px;top:168px;font-size:7px;color:#666;line-height:10px">IT Systems Engineer<br><span style="color:#ccc">Palo Alto, CA<br>12 days ago</span></div><div class="dots" style="left:938px;top:181px"></div>
<div class="av" style="left:832px;top:213px;width:32px;height:32px"></div><div class="t" style="left:871px;top:213px;font-size:7px;color:#666;line-height:10px">Sr. Developer<br><span style="color:#ccc">Palo Alto, CA<br>12 days ago</span></div><div class="dots" style="left:938px;top:226px"></div>
<div class="av" style="left:832px;top:257px;width:32px;height:32px"></div><div class="t" style="left:871px;top:257px;font-size:7px;color:#666;line-height:10px">Java Developer<br><span style="color:#ccc">Palo Alto, CA<br>9 hrs ago</span></div><div class="dots" style="left:938px;top:270px"></div>
<div class="av" style="left:832px;top:302px;width:32px;height:32px"></div><div class="t" style="left:871px;top:302px;font-size:7px;color:#666;line-height:10px">IT Systems Engineer<br><span style="color:#ccc">Palo Alto, CA<br>12 days ago</span></div><div class="dots" style="left:938px;top:315px"></div>
<div class="av" style="left:832px;top:347px;width:32px;height:32px"></div><div class="t" style="left:871px;top:347px;font-size:7px;color:#666;line-height:10px">Sr. Developer<br><span style="color:#ccc">Palo Alto, CA<br>12 days ago</span></div><div class="dots" style="left:938px;top:360px"></div>
<div class="av" style="left:832px;top:391px;width:32px;height:32px"></div><div class="t" style="left:871px;top:391px;font-size:7px;color:#666;line-height:10px">Java Developer<br><span style="color:#ccc">Palo Alto, CA<br>9 hrs ago</span></div><div class="dots" style="left:938px;top:404px"></div>
<div class="av" style="left:832px;top:436px;width:32px;height:32px"></div><div class="t" style="left:871px;top:436px;font-size:7px;color:#666;line-height:10px">IT Systems Engineer<br><span style="color:#ccc">Palo Alto, CA<br>12 days ago</span></div><div class="dots" style="left:938px;top:449px"></div>
<div class="av" style="left:832px;top:481px;width:32px;height:32px"></div><div class="t" style="left:871px;top:481px;font-size:7px;color:#666;line-height:10px">Sr. Developer<br><span style="color:#ccc">Palo Alto, CA<br>12 days ago</span></div><div class="dots" style="left:938px;top:494px"></div>
<div class="av" style="left:832px;top:525px;width:32px;height:32px"></div><div class="t" style="left:871px;top:525px;font-size:7px;color:#666;line-height:10px">Java Developer<br><span style="color:#ccc">Palo Alto, CA<br>9 hrs ago</span></div><div class="dots" style="left:938px;top:538px"></div>
<div class="av" style="left:832px;top:570px;width:32px;height:32px"></div><div class="t" style="left:871px;top:570px;font-size:7px;color:#666;line-height:10px">IT Systems Engineer<br><span style="color:#ccc">Palo Alto, CA<br>12 days ago</span></div><div class="dots" style="left:938px;top:583px"></div>
<div class="av" style="left:832px;top:615px;width:32px;height:32px"></div><div class="t" style="left:871px;top:615px;font-size:7px;color:#666;line-height:10px">Sr. Developer<br><span style="color:#ccc">Palo Alto, CA<br>12 days ago</span></div><div class="dots" style="left:938px;top:628px"></div>
<div class="av" style="left:832px;top:660px;width:32px;height:32px"></div><div class="t" style="left:871px;top:660px;font-size:7px;color:#666;line-height:10px">Java Developer<br><span style="color:#ccc">Palo Alto, CA<br>9 hrs ago</span></div><div class="dots" style="left:938px;top:673px"></div>

<!-- ============ COL 5: FEED ============ -->
<div class="c" style="left:823px;top:896px;width:130px;height:553px"></div>
<div class="av" style="left:833px;top:902px;width:11px;height:11px"></div>
<div class="inp" style="left:853px;top:901px;width:77px;height:9px;font-size:3.5px;padding-left:5px">⚲ Search</div>
<div class="hb" style="left:938px;top:903px;width:7px;height:6px;border-width:1px"></div>
<div class="ln" style="left:828px;top:917px;width:122px;height:1px"></div>
<div class="r" style="left:833px;top:926px;width:112px;height:14px;border-radius:4px"></div>
<div class="t" style="left:839px;top:931px;font-size:4.5px;color:#ccc">✎ Create a Post</div>
<div class="t" style="left:914px;top:930px;font-size:5px;color:#555">▙ ◘ ▮</div>
<div class="post" style="left:831px;top:952px;transform:scale(.81)"><div class="av" style="left:8px;top:4px;width:18px;height:18px"></div><div class="t" style="left:32px;top:8px;font-size:6px">Lorem Ipsum <span style="font-size:4px;color:#bbb">&nbsp;9 hrs ago</span></div><div class="t" style="left:32px;top:17px;font-size:4px;color:#ccc">Job Title</div><div class="dots" style="left:136px;top:4px"></div><div class="tx">Lorem ipsum dolor sit amet, consectetur adipiscing<br>elit, sed do eiusmod tempor incididunt ut labore et<br>dolore magna aliqua.Lorem ipsum dolor sit amet,<br>consectetur adipiscing elit, sed do eiusmod tempor<br>incididunt ut labore et dolore magna aliqua.</div><div class="t" style="left:10px;top:62px;font-size:2.8px;color:#ccc">263 Likes · 43 Comments · 8 Shares</div><div class="ln" style="left:9px;top:70px;width:126px;height:1px"></div><div class="ac" style="left:10px">▙ Like</div><div class="ac" style="left:53px">▆ Comment</div><div class="ac" style="left:111px">➦ Share</div></div>
<div class="post" style="left:831px;top:1036px;transform:scale(.81)"><div class="av" style="left:8px;top:4px;width:18px;height:18px"></div><div class="t" style="left:32px;top:8px;font-size:6px">Lorem Ipsum <span style="font-size:4px;color:#bbb">&nbsp;9 hrs ago</span></div><div class="t" style="left:32px;top:17px;font-size:4px;color:#ccc">Job Title</div><div class="dots" style="left:136px;top:4px"></div><div class="tx">Lorem ipsum dolor sit amet, consectetur adipiscing<br>elit, sed do eiusmod tempor incididunt ut labore et<br>dolore magna aliqua.Lorem ipsum dolor sit amet,<br>consectetur adipiscing elit, sed do eiusmod tempor<br>incididunt ut labore et dolore magna aliqua.</div><div class="t" style="left:10px;top:62px;font-size:2.8px;color:#ccc">263 Likes · 43 Comments · 8 Shares</div><div class="ln" style="left:9px;top:70px;width:126px;height:1px"></div><div class="ac" style="left:10px">▙ Like</div><div class="ac" style="left:53px">▆ Comment</div><div class="ac" style="left:111px">➦ Share</div></div>
<div class="post" style="left:831px;top:1122px;transform:scale(.81)"><div class="av" style="left:8px;top:4px;width:18px;height:18px"></div><div class="t" style="left:32px;top:8px;font-size:6px">Lorem Ipsum <span style="font-size:4px;color:#bbb">&nbsp;9 hrs ago</span></div><div class="t" style="left:32px;top:17px;font-size:4px;color:#ccc">Job Title</div><div class="dots" style="left:136px;top:4px"></div><div class="tx">Lorem ipsum dolor sit amet, consectetur adipiscing<br>elit, sed do eiusmod tempor incididunt ut labore et<br>dolore magna aliqua.Lorem ipsum dolor sit amet,<br>consectetur adipiscing elit, sed do eiusmod tempor<br>incididunt ut labore et dolore magna aliqua.</div><div class="t" style="left:10px;top:62px;font-size:2.8px;color:#ccc">263 Likes · 43 Comments · 8 Shares</div><div class="ln" style="left:9px;top:70px;width:126px;height:1px"></div><div class="ac" style="left:10px">▙ Like</div><div class="ac" style="left:53px">▆ Comment</div><div class="ac" style="left:111px">➦ Share</div></div>
<div class="post" style="left:831px;top:1206px;transform:scale(.81)"><div class="av" style="left:8px;top:4px;width:18px;height:18px"></div><div class="t" style="left:32px;top:8px;font-size:6px">Lorem Ipsum <span style="font-size:4px;color:#bbb">&nbsp;9 hrs ago</span></div><div class="t" style="left:32px;top:17px;font-size:4px;color:#ccc">Job Title</div><div class="dots" style="left:136px;top:4px"></div><div class="tx">Lorem ipsum dolor sit amet, consectetur adipiscing<br>elit, sed do eiusmod tempor incididunt ut labore et<br>dolore magna aliqua.Lorem ipsum dolor sit amet,<br>consectetur adipiscing elit, sed do eiusmod tempor<br>incididunt ut labore et dolore magna aliqua.</div><div class="t" style="left:10px;top:62px;font-size:2.8px;color:#ccc">263 Likes · 43 Comments · 8 Shares</div><div class="ln" style="left:9px;top:70px;width:126px;height:1px"></div><div class="ac" style="left:10px">▙ Like</div><div class="ac" style="left:53px">▆ Comment</div><div class="ac" style="left:111px">➦ Share</div></div>
<div class="a" style="left:884px;top:1296px;width:10px;height:10px;border-radius:50%;border:1px dashed #555;border-bottom-color:transparent"></div>
<div class="ft" style="left:823px;top:1320px;transform:scale(.8025,.82)">
 <div class="col" style="left:3px"><b>Company</b><br>About Us<br>Contact<br>Careers</div>
 <div class="col" style="left:54px"><b>Job</b><br>Job Search<br>Create Account<br>Job Seeker</div>
 <div class="col" style="left:105px"><b>Employers</b><br>Resume Search<br>Register<br>Employer Help</div>
 <svg class="ic" style="left:45px"><use href="#fb"/></svg><svg class="ic" style="left:75px"><use href="#ig"/></svg><svg class="ic" style="left:104px"><use href="#tw"/></svg>
 <div class="p" style="top:119px">Privacy &amp; Terms</div><div class="p" style="top:139px;font-size:4px">Clusterize © All rights reserved 2019</div>
</div>

<!-- EDIT PROFILE -->
<div class="r" style="left:849px;top:1467px;width:82px;height:260px;border-radius:3px"></div>
<div class="t" style="left:849px;width:80px;text-align:center;top:1470px;font-size:5px;font-weight:bold;color:#555">Edit Profile Details</div>
<div class="t" style="left:920px;top:1469px;font-size:6px;color:#888">✕</div>
<div class="inp" style="left:853px;top:1486px;width:72px;height:8px;font-size:3px;color:#555;padding-left:5px">John Smith</div>
<div class="inp" style="left:853px;top:1502px;width:72px;height:8px;font-size:3px;color:#555;padding-left:5px">Front End Developer</div>
<div class="inp" style="left:853px;top:1518px;width:72px;height:8px;font-size:3px;color:#555;padding-left:5px">Orlando, Florida</div>
<div class="inp" style="left:853px;top:1533px;width:72px;height:8px;font-size:3px;color:#555;padding-left:5px">john.smith@email.com</div>
<div class="btn" style="left:866px;top:1552px;width:46px;height:8px;font-size:3.5px">Resume ⇪</div>
<div class="t" style="left:849px;width:80px;text-align:center;top:1566px;font-size:3px;color:#666">johnSmith_Resume.pdf</div>
<div class="inp" style="left:855px;top:1589px;width:70px;height:8px;font-size:3px;padding-left:5px">Type a related skill</div>
<div class="a" style="left:855px;top:1603px;width:70px;font-size:2.8px;color:#666;line-height:14.3px;white-space:nowrap">
<span style="display:inline-block;width:40px;height:7px;line-height:7px;border-radius:4px;box-shadow:0 0 2px rgba(0,0,0,.3);padding-left:3px">User Experience ×</span> <span style="display:inline-block;width:25px;height:7px;line-height:7px;border-radius:4px;box-shadow:0 0 2px rgba(0,0,0,.3);padding-left:3px">HTML5 ×</span><br>
<span style="display:inline-block;width:40px;height:7px;line-height:7px;border-radius:4px;box-shadow:0 0 2px rgba(0,0,0,.3);padding-left:3px">Responsiveness ×</span> <span style="display:inline-block;width:25px;height:7px;line-height:7px;border-radius:4px;box-shadow:0 0 2px rgba(0,0,0,.3);padding-left:3px">ReactJs ×</span><br>
<span style="display:inline-block;width:34px;height:7px;line-height:7px;border-radius:4px;box-shadow:0 0 2px rgba(0,0,0,.3);padding-left:3px">JavaScript ×</span> &nbsp;<span style="display:inline-block;width:28px;height:7px;line-height:7px;border-radius:4px;box-shadow:0 0 2px rgba(0,0,0,.3);padding-left:3px">CSS / SCSS ×</span><br>
<span style="display:inline-block;width:40px;height:7px;line-height:7px;border-radius:4px;box-shadow:0 0 2px rgba(0,0,0,.3);padding-left:3px">User Experience ×</span> <span style="display:inline-block;width:25px;height:7px;line-height:7px;border-radius:4px;box-shadow:0 0 2px rgba(0,0,0,.3);padding-left:3px">HTML5 ×</span><br>
<span style="display:inline-block;width:40px;height:7px;line-height:7px;border-radius:4px;box-shadow:0 0 2px rgba(0,0,0,.3);padding-left:3px">Responsiveness ×</span> <span style="display:inline-block;width:25px;height:7px;line-height:7px;border-radius:4px;box-shadow:0 0 2px rgba(0,0,0,.3);padding-left:3px">ReactJs ×</span><br>
<span style="display:inline-block;width:34px;height:7px;line-height:7px;border-radius:4px;box-shadow:0 0 2px rgba(0,0,0,.3);padding-left:3px">JavaScript ×</span> &nbsp;<span style="display:inline-block;width:28px;height:7px;line-height:7px;border-radius:4px;box-shadow:0 0 2px rgba(0,0,0,.3);padding-left:3px">CSS / SCSS ×</span>
</div>
<div class="btn" style="left:853px;top:1693px;width:72px;height:7px;font-size:3.5px">Save</div>
<div class="gb" style="left:867px;top:1709px;width:44px;height:7px;font-size:3.5px">Cancel</div>
</body></html>
